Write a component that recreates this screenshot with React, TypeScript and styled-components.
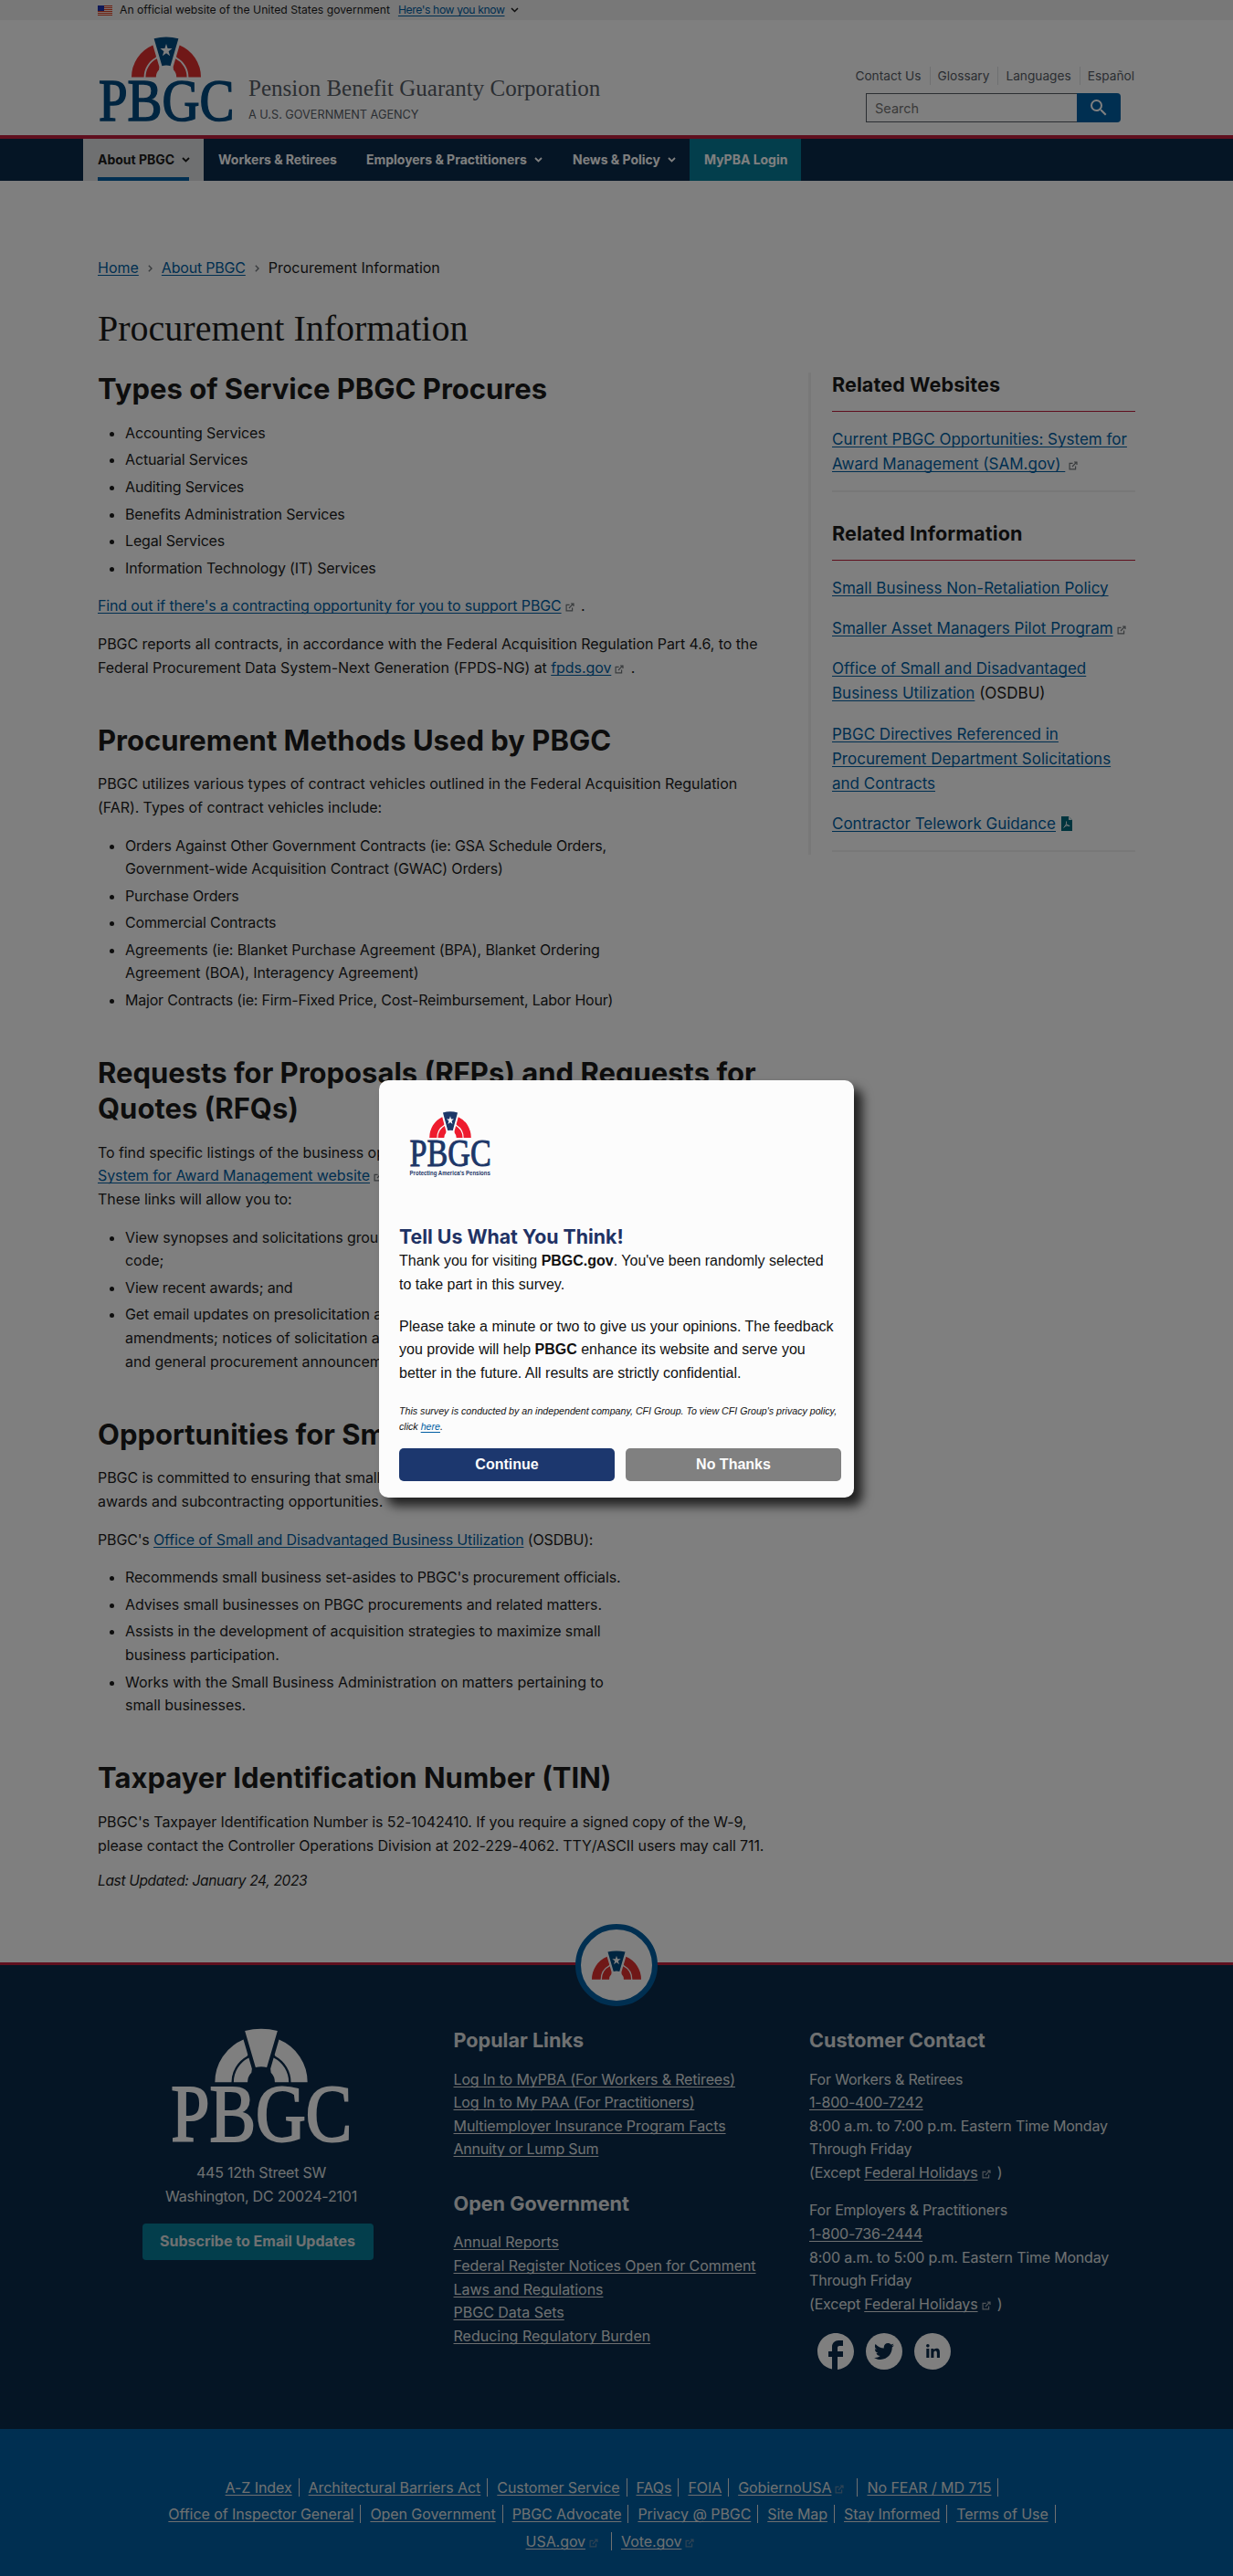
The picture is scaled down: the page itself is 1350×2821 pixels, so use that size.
import React from "react";
import styled, { createGlobalStyle, css } from "styled-components";
import { MdFacebook, MdSearch } from "react-icons/md";
import { FaTwitter, FaLinkedinIn } from "react-icons/fa";

const SANS = `Inter, "Liberation Sans", sans-serif`;
const SERIF = `"Liberation Serif", serif`;
const ARIAL = `"Liberation Sans", Arial, sans-serif`;

const c = {
  ink: "#1b1b1b",
  gray: "#565c65",
  link: "#005ea2",
  navy: "#0b2b4b",
  blue: "#005ea2",
  teal: "#077c99",
  red: "#be1e3c",
  line: "#f0f0f0",
};

const GlobalStyle = createGlobalStyle`
  *, *::before, *::after { box-sizing: border-box; }
  body { margin: 0; background: #fff; }
`;

const Page = styled.div`
  position: relative;
  width: 1350px;
  height: 2821px;
  overflow: hidden;
  font-family: ${SANS};
  font-size: 16px;
  line-height: 25.6px;
  color: ${c.ink};
  white-space: nowrap;
`;

const Container = styled.div`
  width: 1136px;
  margin: 0 auto;
`;

const A = styled.a<{ $light?: boolean; $ls?: number }>`
  color: ${(p) => (p.$light ? "#dfe1e2" : c.link)};
  text-decoration: underline;
  text-underline-offset: 2px;
  text-decoration-thickness: 1px;
  text-decoration-skip-ink: none;
  ${(p) => p.$ls !== undefined && css`letter-spacing: ${p.$ls}px;`}
`;

/* ---------- icons ---------- */

const ExtSvg = styled.svg`
  display: inline-block;
  width: 10px;
  height: 10px;
  margin: 0 3px 0 4px;
  vertical-align: -1px;
  fill: none;
  stroke: currentColor;
`;
const ExtWrap = styled.span<{ $light?: boolean; $dim?: boolean }>`
  color: ${(p) => (p.$dim ? "#5f86a8" : p.$light ? "#a0a8b0" : "#71767a")};
`;
const Ext = ({ light, dim }: { light?: boolean; dim?: boolean }) => (
  <ExtWrap $light={light} $dim={dim}>
    <ExtSvg viewBox="0 0 10 10" strokeWidth="1.2">
      <path d="M4.6 2.4H1.1v6.5h6.5V5.6M4 6l4.6-4.8M6 1h3v3" />
    </ExtSvg>
  </ExtWrap>
);

const ChevSvg = styled.svg`
  fill: none;
  stroke: currentColor;
  flex: none;
`;
const ChevDown = ({ sw = 1.8 }: { sw?: number }) => (
  <ChevSvg width={9} height={6} viewBox="0 0 9 6" strokeWidth={sw}>
    <path d="M1 1l3.5 3.5L8 1" />
  </ChevSvg>
);
const ChevRight = () => (
  <ChevSvg width={5} height={8} viewBox="0 0 5 8" strokeWidth={1.4}>
    <path d="M.8.8L4 4 .8 7.2" />
  </ChevSvg>
);

const Flag = () => (
  <svg width="16" height="11" viewBox="0 0 16 11">
    <rect width="16" height="11" fill="#fff" />
    {[0, 2, 4, 6, 8, 10].map((y) => (
      <rect key={y} y={y} width="16" height="1.1" fill="#db3e1f" />
    ))}
    <rect width="7" height="6" fill="#1e33b1" />
  </svg>
);

const PdfSvg = styled.svg`
  margin-left: 1px;
  vertical-align: -2px;
`;
const PdfIcon = () => (
  <PdfSvg width="12" height="16" viewBox="0 0 12 16">
    <path d="M0 0h8l4 4v12H0z" fill="#00687d" />
    <path d="M8 0v4h4z" fill="#e6f2f4" />
    <path
      d="M2.5 12.5C5 11 6 7.5 5.5 5.5M5.5 8c.5 1.5 2 2.700 3.800 2.500M3.500 11c2-1 3.500-1.200 5-1"
      fill="none"
      stroke="#fff"
      strokeWidth=".9"
    />
  </PdfSvg>
);

const Arch = ({ red, blue, star }: { red: string; blue: string; star?: string }) => {
  const half = (
    <g fill={red}>
      <path d="M-38 0A38 38 0 0 1-14.6-35.1L-11.6-24.8-11-22.6-11.6-21.5A24.4 24.4 0 0 0-24.4 0Z" />
      <path d="M-22.6 0A22.6 22.6 0 0 1-10.2-20.2L-7.6-11.2-8-8A11.2 11.2 0 0 0-11.2 0Z" />
    </g>
  );
  return (
    <g>
      {half}
      <g transform="scale(-1 1)">{half}</g>
      <path d="M-13.4-42.3Q0-45.6 13.4-42.3L4.6-12.2Q0-13.6-4.6-12.2Z" fill={blue} />
      {star && (
        <path
          d="M0-36.5L1.6-31.4H6.6L2.6-28.3L4.1-23.2L0-26.3L-4.1-23.2L-2.6-28.3L-6.6-31.4H-1.6Z"
          fill={star}
        />
      )}
    </g>
  );
};

const LogoText = styled.text`
  font-family: ${SERIF};
  font-size: 66px;
`;
const TagText = styled.text`
  font-family: ${ARIAL};
  font-size: 11px;
  font-weight: 700;
`;

const Logo = ({
  width,
  red,
  blue,
  letters,
  star,
  stretch = 1,
  tagline,
}: {
  width: number;
  red: string;
  blue: string;
  letters: string;
  star?: string;
  stretch?: number;
  tagline?: boolean;
}) => {
  const h = 112;
  return (
    <svg
      width={width}
      height={((width * h) / 150) * stretch}
      viewBox={`0 0 150 ${h}`}
      preserveAspectRatio="none"
    >
      <g transform="translate(75 44.5)">
        <Arch red={red} blue={blue} star={star} />
      </g>
      <LogoText
        x="1"
        y="92"
        textLength="148.5"
        lengthAdjust="spacingAndGlyphs"
        fill={letters}
        stroke={letters}
        strokeWidth="1.6"
      >
        PBGC
      </LogoText>
      {tagline && (
        <TagText x="1" y="107" textLength="147" lengthAdjust="spacingAndGlyphs" fill={letters}>
          Protecting America's Pensions
        </TagText>
      )}
    </svg>
  );
};

/* ---------- header ---------- */

const Banner = styled.div`
  height: 22px;
  background: #f0f0f0;
  font-size: 12.2px;
  line-height: 22px;
`;
const BannerRow = styled(Container)`
  display: flex;
  align-items: center;
`;
const BannerText = styled.span`
  margin: 0 9px 0 8px;
`;
const BannerLink = styled(A)`
  margin-right: 6px;
  letter-spacing: -0.4px;
`;

const Header = styled.header`
  height: 126px;
`;
const HeaderRow = styled(Container)`
  display: flex;
  justify-content: space-between;
`;
const Brand = styled.div`
  display: flex;
  padding-top: 18px;
`;
const BrandText = styled.div`
  margin: 42px 0 0 15px;
  color: ${c.gray};
`;
const BrandName = styled.div`
  font-family: ${SERIF};
  font-size: 25px;
  line-height: 30px;
`;
const BrandSub = styled.div`
  margin-top: 4px;
  font-size: 12.7px;
  line-height: 20px;
`;
const HeaderTools = styled.div`
  display: flex;
  flex-direction: column;
  padding-top: 51px;
`;
const TopLinks = styled.div`
  display: flex;
  justify-content: flex-end;
  line-height: 20px;
  height: 20px;
  margin-right: 1px;
  font-size: 13.7px;
  color: ${c.gray};
`;
const TopLink = styled.span`
  & + & {
    margin-left: 9px;
    padding-left: 8px;
    border-left: 1px solid #dfe1e2;
  }
`;
const SearchForm = styled.div`
  display: flex;
  align-self: flex-end;
  width: 279px;
  height: 32px;
  margin: 9px 16px 0 0;
`;
const SearchBox = styled.div`
  flex: 1;
  border: 1px solid ${c.gray};
  border-right: 0;
  padding-left: 9px;
  font-size: 14.5px;
  line-height: 31px;
  color: #757575;
`;
const SearchButton = styled.div`
  display: grid;
  place-items: center;
  width: 48px;
  background: ${c.blue};
  color: #fff;
  border-radius: 0 4px 4px 0;
`;

const NavBar = styled.nav`
  height: 50px;
  border-top: 4px solid ${c.red};
  background: ${c.navy};
`;
const NavRow = styled.div`
  display: flex;
  width: 1168px;
  margin: 0 auto;
`;
const NavItem = styled.div<{ $kind?: "active" | "login"; $w: number }>`
  display: flex;
  align-items: center;
  gap: 8px;
  width: ${(p) => p.$w}px;
  height: 46px;
  padding: 0 16px;
  font-size: 14px;
  font-weight: 700;
  letter-spacing: -0.02px;
  color: #fff;
  ${(p) => p.$kind === "login" && css`background: ${c.teal};`}
  ${(p) =>
    p.$kind === "active" &&
    css`
      background: #dfe1e2;
      color: ${c.ink};
      &::after {
        content: "";
        position: absolute;
        width: 100px;
        height: 4px;
        margin-top: 42px;
        background: ${c.blue};
      }
    `}
`;

/* ---------- content ---------- */

const Crumbs = styled(Container)`
  display: flex;
  align-items: center;
  gap: 10px;
  padding-top: 83px;
  color: ${c.ink};
`;
const CrumbSep = styled.span`
  display: flex;
  color: #71767a;
`;
const H1 = styled.h1`
  width: 1136px;
  margin: 29px auto 0;
  font-family: ${SERIF};
  font-weight: 400;
  font-size: 40px;
  line-height: 48px;
`;
const Columns = styled(Container)`
  display: flex;
  align-items: flex-start;
  padding-top: 22.5px;
`;
const Main = styled.main`
  width: 778px;
`;
const H2 = styled.h2`
  margin: 46.5px 0 16.7px;
  font-size: 31px;
  line-height: 39px;
  font-weight: 700;
  &:first-child {
    margin-top: 0;
  }
`;
const P = styled.p<{ $ls?: number }>`
  margin: 0 0 16px;
  letter-spacing: ${(p) => p.$ls ?? -0.07}px;
`;
const UL = styled.ul`
  margin: 0 0 16px;
  padding-left: 30px;
  list-style: disc;
`;
const LI = styled.li<{ $ls?: number }>`
  letter-spacing: ${(p) => p.$ls ?? -0.15}px;
  &:not(:last-child) {
    margin-bottom: 4px;
  }
`;
const Updated = styled.p`
  margin: -3px 0 0;
  font-style: italic;
  font-size: 15.5px;
  letter-spacing: -0.33px;
`;

const Aside = styled.aside`
  width: 358px;
  height: 528px;
  padding-left: 23px;
  border-left: 3px solid ${c.line};
  margin-top: 2px;
`;
const SideTitle = styled.h3<{ $first?: boolean }>`
  margin: ${(p) => (p.$first ? "0" : "31.5px")} 0 17px;
  padding-bottom: 16px;
  font-size: 21.6px;
  letter-spacing: 0.08px;
  line-height: 26px;
  font-weight: 700;
  border-bottom: 1px solid ${c.red};
`;
const SideList = styled.div`
  padding-bottom: 15px;
  border-bottom: 2px solid ${c.line};
  font-size: 17px;
  line-height: 27.1px;
`;
const SideItem = styled.div`
  & + & {
    margin-top: 17.2px;
  }
`;

/* ---------- footer ---------- */

const Footer = styled.footer`
  position: absolute;
  left: 0;
  right: 0;
  bottom: 0;
  height: 672px;
`;
const FooterMain = styled.div`
  height: 511px;
  border-top: 3px solid ${c.red};
  background: ${c.navy};
  color: #dfe1e2;
`;
const Badge = styled.div`
  position: absolute;
  top: -42px;
  left: 630px;
  width: 90px;
  height: 90px;
  border: 6px solid ${c.blue};
  border-radius: 50%;
  background: #fff;
  display: grid;
  place-items: center;
`;
const FooterGrid = styled(Container)`
  display: grid;
  grid-template-columns: 389.5px 389.5px 357px;
  padding-top: 69px;
`;
const FooterBrand = styled.div`
  display: flex;
  flex-direction: column;
  align-items: center;
  width: 358px;
  text-align: center;
`;
const Address = styled.div`
  margin-top: -3px;
  letter-spacing: -0.22px;
`;
const Subscribe = styled.div`
  margin: 16px 8px 0 0;
  width: 253px;
  height: 40px;
  border-radius: 4px;
  background: ${c.teal};
  font-weight: 700;
  line-height: 39px;
`;
const FootCol = styled.div``;
const FootTitle = styled.h4`
  margin: 0 0 16.5px;
  font-size: 21.6px;
  line-height: 27px;
  font-weight: 700;
  color: #dfe1e2;
`;
const FootBlock = styled.div`
  margin-bottom: 33px;
`;
const Contact = styled.p`
  margin: 0 0 16px;
  letter-spacing: -0.2px;
`;
const Social = styled.div`
  display: flex;
  align-items: center;
  gap: 13px;
  margin: 19px 0 0 9px;
`;
const Round = styled.div`
  display: grid;
  place-items: center;
  width: 40px;
  height: 40px;
  border-radius: 50%;
  background: #fff;
  color: ${c.navy};
`;
const FbWrap = styled.div`
  width: 40px;
  height: 40px;
  color: #fff;
  svg {
    display: block;
    margin: -4px;
  }
`;
const FooterBottom = styled.div`
  height: 161px;
  padding-top: 49px;
  background: ${c.blue};
  color: #dfe1e2;
`;
const BottomRow = styled.div`
  display: flex;
  justify-content: center;
  height: 29.5px;
  align-items: center;
  letter-spacing: -0.07px;
`;
const BottomItem = styled.span<{ $last?: boolean; $ext?: boolean }>`
  display: inline-block;
  line-height: 20px;
  padding-right: ${(p) => (p.$ext ? 11 : 7)}px;
  margin-right: ${(p) => (p.$last ? 0 : 10)}px;
  border-right: ${(p) => (p.$last ? "0" : "1px solid #dfe1e2")};
`;

/* ---------- survey dialog ---------- */

const Overlay = styled.div`
  position: absolute;
  inset: 0;
  background: rgba(0, 0, 0, 0.5);
`;
const Dialog = styled.div`
  position: absolute;
  left: 415px;
  top: 1183px;
  width: 520px;
  height: 457px;
  padding: 34px 14px 0 22px;
  border-radius: 10px;
  background: #fcfcfc;
  box-shadow: 9px 9px 12px rgba(0, 0, 0, 0.75);
  font-family: ${ARIAL};
  color: #111;
`;
const DialogLogo = styled.div`
  height: 123px;
  padding-left: 11px;
`;
const DialogTitle = styled.div`
  font-family: ${SANS};
  font-size: 21.3px;
  line-height: 28px;
  font-weight: 700;
  color: #1f3264;
`;
const DialogText = styled.p`
  margin: 0 0 20.4px;
  font-size: 16px;
  line-height: 25.6px;
`;
const DialogNote = styled.p`
  margin: 0;
  font-size: 10.65px;
  line-height: 17px;
  font-style: italic;
`;
const DialogButtons = styled.div`
  display: flex;
  gap: 12px;
  margin-top: 15px;
`;
const DialogButton = styled.div<{ $bg: string }>`
  width: 236px;
  height: 36px;
  border-radius: 5px;
  background: ${(p) => p.$bg};
  color: #fcfcfc;
  font-size: 16px;
  line-height: 35px;
  font-weight: 700;
  text-align: center;
`;

const rows: { t: string; ext?: boolean }[][] = [
  [
    { t: "A-Z Index" },
    { t: "Architectural Barriers Act" },
    { t: "Customer Service" },
    { t: "FAQs" },
    { t: "FOIA" },
    { t: "GobiernoUSA", ext: true },
    { t: "No FEAR / MD 715" },
  ],
  [
    { t: "Office of Inspector General" },
    { t: "Open Government" },
    { t: "PBGC Advocate" },
    { t: "Privacy @ PBGC" },
    { t: "Site Map" },
    { t: "Stay Informed" },
    { t: "Terms of Use" },
  ],
  [
    { t: "USA.gov", ext: true },
    { t: "Vote.gov", ext: true },
  ],
];

const ContactBlock = ({ who, phone, hours }: { who: string; phone: string; hours: string }) => (
  <Contact>
    {who}
    <br />
    <A $light>{phone}</A>
    <br />
    {hours} Eastern Time Monday
    <br />
    Through Friday
    <br />
    (Except{" "}
    <A $light $ls={-0.1}>
      Federal Holidays
    </A>
    <Ext light />
    {"\u00a0)"}
  </Contact>
);

const FootLinks = ({ title, items }: { title: string; items: { t: string; ls: number }[] }) => (
  <FootBlock>
    <FootTitle>{title}</FootTitle>
    {items.map(({ t, ls }) => (
      <div key={t}>
        <A $light $ls={ls}>
          {t}
        </A>
      </div>
    ))}
  </FootBlock>
);

export default function App() {
  return (
    <Page>
      <GlobalStyle />
      <Banner>
        <BannerRow>
          <Flag />
          <BannerText>An official website of the United States government</BannerText>
          <BannerLink>Here's how you know</BannerLink>
          <ChevDown sw={1.5} />
        </BannerRow>
      </Banner>
      <Header>
        <HeaderRow>
          <Brand>
            <Logo width={150} red="#e0302f" blue="#004a80" letters="#004a80" star="#fff" />
            <BrandText>
              <BrandName>Pension Benefit Guaranty Corporation</BrandName>
              <BrandSub>A U.S. GOVERNMENT AGENCY</BrandSub>
            </BrandText>
          </Brand>
          <HeaderTools>
            <TopLinks>
              <TopLink>Contact Us</TopLink>
              <TopLink>Glossary</TopLink>
              <TopLink>Languages</TopLink>
              <TopLink>Español</TopLink>
            </TopLinks>
            <SearchForm>
              <SearchBox>Search</SearchBox>
              <SearchButton>
                <MdSearch size={24} />
              </SearchButton>
            </SearchForm>
          </HeaderTools>
        </HeaderRow>
      </Header>
      <NavBar>
        <NavRow>
          <NavItem $kind="active" $w={132}>
            About PBGC <ChevDown />
          </NavItem>
          <NavItem $w={162}>Workers &amp; Retirees</NavItem>
          <NavItem $w={226}>
            Employers &amp; Practitioners <ChevDown />
          </NavItem>
          <NavItem $w={144}>
            News &amp; Policy <ChevDown />
          </NavItem>
          <NavItem $kind="login" $w={122}>
            MyPBA Login
          </NavItem>
        </NavRow>
      </NavBar>

      <Crumbs>
        <A>Home</A>
        <CrumbSep>
          <ChevRight />
        </CrumbSep>
        <A $ls={-0.2}>About PBGC</A>
        <CrumbSep>
          <ChevRight />
        </CrumbSep>
        <span>Procurement Information</span>
      </Crumbs>
      <H1>Procurement Information</H1>

      <Columns>
        <Main>
          <H2>Types of Service PBGC Procures</H2>
          <UL>
            <LI>Accounting Services</LI>
            <LI>Actuarial Services</LI>
            <LI>Auditing Services</LI>
            <LI>Benefits Administration Services</LI>
            <LI>Legal Services</LI>
            <LI>Information Technology (IT) Services</LI>
          </UL>
          <P $ls={-0.14}>
            <A>Find out if there's a contracting opportunity for you to support PBGC</A>
            <Ext /> .
          </P>
          <P>
            PBGC reports all contracts, in accordance with the Federal Acquisition Regulation Part 4.6, to the
            <br />
            Federal Procurement Data System-Next Generation (FPDS-NG) at <A>fpds.gov</A>
            <Ext /> .
          </P>

          <H2>Procurement Methods Used by PBGC</H2>
          <P>
            PBGC utilizes various types of contract vehicles outlined in the Federal Acquisition Regulation
            <br />
            (FAR). Types of contract vehicles include:
          </P>
          <UL>
            <LI>
              Orders Against Other Government Contracts (ie: GSA Schedule Orders,
              <br />
              Government-wide Acquisition Contract (GWAC) Orders)
            </LI>
            <LI>Purchase Orders</LI>
            <LI>Commercial Contracts</LI>
            <LI $ls={-0.09}>
              Agreements (ie: Blanket Purchase Agreement (BPA), Blanket Ordering
              <br />
              Agreement (BOA), Interagency Agreement)
            </LI>
            <LI $ls={-0.2}>Major Contracts (ie: Firm-Fixed Price, Cost-Reimbursement, Labor Hour)</LI>
          </UL>

          <H2>
            Requests for Proposals (RFPs) and Requests for
            <br />
            Quotes (RFQs)
          </H2>
          <P>
            To find specific listings of the business opportunities, go to the
            <br />
            <A>System for Award Management website</A>
            <Ext />
            <br />
            These links will allow you to:
          </P>
          <UL>
            <LI $ls={-0.08}>
              View synopses and solicitations grouped by
              <br />
              code;
            </LI>
            <LI>View recent awards; and</LI>
            <LI $ls={-0.08}>
              Get email updates on presolicitation and
              <br />
              amendments; notices of solicitation and
              <br />
              and general procurement announcements.
            </LI>
          </UL>

          <H2>Opportunities for Small Businesses</H2>
          <P>
            PBGC is committed to ensuring that small businesses
            <br />
            awards and subcontracting opportunities.
          </P>
          <P $ls={-0.15}>
            PBGC's <A>Office of Small and Disadvantaged Business Utilization</A> (OSDBU):
          </P>
          <UL>
            <LI>Recommends small business set-asides to PBGC's procurement officials.</LI>
            <LI $ls={-0.13}>Advises small businesses on PBGC procurements and related matters.</LI>
            <LI $ls={-0.09}>
              Assists in the development of acquisition strategies to maximize small
              <br />
              business participation.
            </LI>
            <LI $ls={-0.07}>
              Works with the Small Business Administration on matters pertaining to
              <br />
              small businesses.
            </LI>
          </UL>

          <H2>Taxpayer Identification Number (TIN)</H2>
          <P $ls={-0.1}>
            PBGC's Taxpayer Identification Number is 52-1042410. If you require a signed copy of the W-9,
            <br />
            please contact the Controller Operations Division at 202-229-4062. TTY/ASCII users may call 711.
          </P>
          <Updated>Last Updated: January 24, 2023</Updated>
        </Main>

        <Aside>
          <SideTitle $first>Related Websites</SideTitle>
          <SideList>
            <SideItem>
              <A>
                Current PBGC Opportunities: System for
                <br />
                Award Management (SAM.gov)&nbsp;
              </A>
              <Ext />
            </SideItem>
          </SideList>
          <SideTitle>Related Information</SideTitle>
          <SideList>
            <SideItem>
              <A>Small Business Non-Retaliation Policy</A>
            </SideItem>
            <SideItem>
              <A>Smaller Asset Managers Pilot Program</A>
              <Ext />
            </SideItem>
            <SideItem>
              <A>
                Office of Small and Disadvantaged
                <br />
                Business Utilization
              </A>{" "}
              (OSDBU)
            </SideItem>
            <SideItem>
              <A>
                PBGC Directives Referenced in
                <br />
                Procurement Department Solicitations
                <br />
                and Contracts
              </A>
            </SideItem>
            <SideItem>
              <A>Contractor Telework Guidance</A> <PdfIcon />
            </SideItem>
          </SideList>
        </Aside>
      </Columns>

      <Footer>
        <FooterMain>
          <FooterGrid>
            <FooterBrand>
              <Logo width={200} red="#fff" blue="#fff" letters="#fff" />
              <Address>
                445 12th Street SW
                <br />
                Washington, DC 20024-2101
              </Address>
              <Subscribe>Subscribe to Email Updates</Subscribe>
            </FooterBrand>
            <FootCol>
              <FootLinks
                title="Popular Links"
                items={[
                  { t: "Log In to MyPBA (For Workers & Retirees)", ls: -0.15 },
                  { t: "Log In to My PAA (For Practitioners)", ls: -0.18 },
                  { t: "Multiemployer Insurance Program Facts", ls: -0.07 },
                  { t: "Annuity or Lump Sum", ls: -0.22 },
                ]}
              />
              <FootLinks
                title="Open Government"
                items={[
                  { t: "Annual Reports", ls: 0 },
                  { t: "Federal Register Notices Open for Comment", ls: -0.06 },
                  { t: "Laws and Regulations", ls: -0.05 },
                  { t: "PBGC Data Sets", ls: 0 },
                  { t: "Reducing Regulatory Burden", ls: 0 },
                ]}
              />
            </FootCol>
            <FootCol>
              <FootTitle>Customer Contact</FootTitle>
              <ContactBlock who="For Workers & Retirees" phone="1-800-400-7242" hours="8:00 a.m. to 7:00 p.m." />
              <ContactBlock who="For Employers & Practitioners" phone="1-800-736-2444" hours="8:00 a.m. to 5:00 p.m." />
              <Social>
                <FbWrap>
                  <MdFacebook size={48} />
                </FbWrap>
                <Round>
                  <FaTwitter size={22} />
                </Round>
                <Round>
                  <FaLinkedinIn size={17} />
                </Round>
              </Social>
            </FootCol>
          </FooterGrid>
        </FooterMain>
        <FooterBottom>
          {rows.map((row, r) => (
            <BottomRow key={r}>
              {row.map((i, k) => (
                <BottomItem key={i.t} $ext={i.ext} $last={r === 2 && k === 1}>
                  <A $light>{i.t}</A>
                  {i.ext && <Ext dim />}
                </BottomItem>
              ))}
            </BottomRow>
          ))}
        </FooterBottom>
        <Badge>
          <svg width="54" height="32" viewBox="-38 -44.5 76 45">
            <Arch red="#e0302f" blue="#004a80" star="#fff" />
          </svg>
        </Badge>
      </Footer>

      <Overlay />
      <Dialog>
        <DialogLogo>
          <Logo width={90} red="#ee1c2e" blue="#1d3768" letters="#1d3768" star="#fff" stretch={1.09} tagline />
        </DialogLogo>
        <DialogTitle>Tell Us What You Think!</DialogTitle>
        <DialogText>
          Thank you for visiting <b>PBGC.gov</b>. You've been randomly selected
          <br />
          to take part in this survey.
        </DialogText>
        <DialogText>
          Please take a minute or two to give us your opinions. The feedback
          <br />
          you provide will help <b>PBGC</b> enhance its website and serve you
          <br />
          better in the future. All results are strictly confidential.
        </DialogText>
        <DialogNote>
          This survey is conducted by an independent company, CFI Group. To view CFI Group's privacy policy,
          <br />
          click <A>here</A>.
        </DialogNote>
        <DialogButtons>
          <DialogButton $bg="#1c376e">Continue</DialogButton>
          <DialogButton $bg="#808080">No Thanks</DialogButton>
        </DialogButtons>
      </Dialog>
    </Page>
  );
}
